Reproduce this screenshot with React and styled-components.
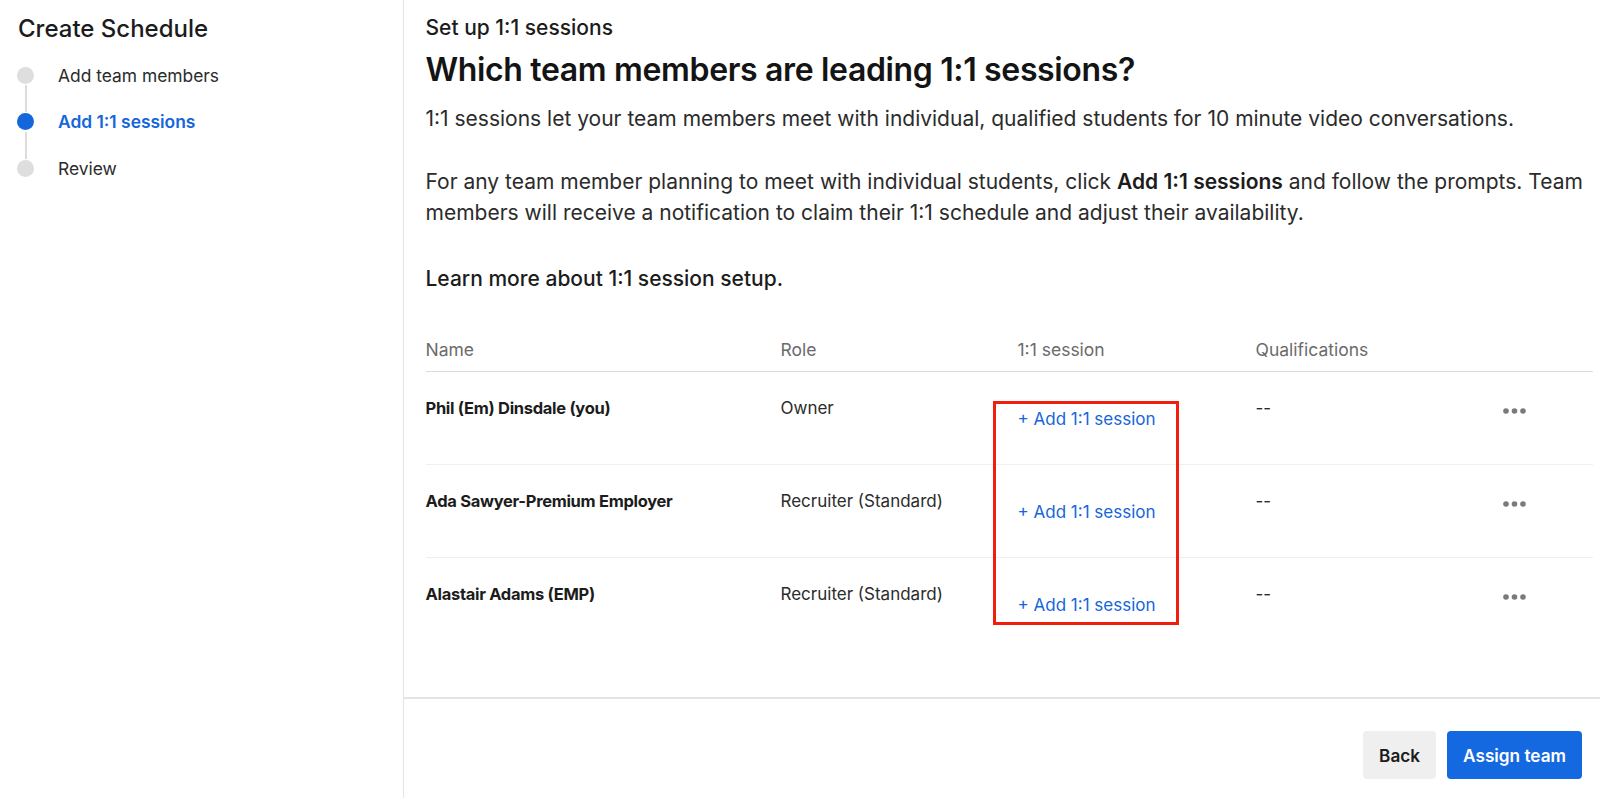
import React from 'react';
import styled, { createGlobalStyle } from 'styled-components';

const colorInk = '#1c1c1c';
const colorBody = '#2b2b2b';
const colorMuted = '#6b6b6b';
const colorBlue = '#1566db';
const colorLine = '#e4e4e4';

const GlobalStyle = createGlobalStyle`
  html, body {
    margin: 0;
    padding: 0;
    background: #fff;
  }
  body {
    font-family: Inter, "Noto Sans", "Liberation Sans", sans-serif;
    color: ${colorInk};
  }
  * { box-sizing: border-box; }
`;

const steps = [
  { label: 'Add team members', state: 'done' },
  { label: 'Add 1:1 sessions', state: 'active' },
  { label: 'Review', state: 'todo' },
];

const members = [
  { name: 'Phil (Em) Dinsdale (you)', role: 'Owner' },
  { name: 'Ada Sawyer-Premium Employer', role: 'Recruiter (Standard)' },
  { name: 'Alastair Adams (EMP)', role: 'Recruiter (Standard)' },
];

const MoreIcon = () => (
  <svg width="23" height="6" viewBox="0 0 23 6" fill="#7a7a7a">
    <circle cx="3" cy="3" r="2.8" />
    <circle cx="11.5" cy="3" r="2.8" />
    <circle cx="20" cy="3" r="2.8" />
  </svg>
);

const App = () => (
  <>
    <GlobalStyle />
    <Page>
      <Sidebar>
        <SidebarTitle>Create Schedule</SidebarTitle>
        <StepList>
          {steps.map((step, i) => (
            <Step key={step.label} last={i === steps.length - 1}>
              <StepDot active={step.state === 'active'} />
              <StepLabel active={step.state === 'active'}>{step.label}</StepLabel>
            </Step>
          ))}
        </StepList>
      </Sidebar>

      <Main>
        <Content>
          <Eyebrow>Set up 1:1 sessions</Eyebrow>
          <Heading>Which team members are leading 1:1 sessions?</Heading>
          <Paragraph>
            1:1 sessions let your team members meet with individual, qualified students for 10 minute video conversations.
          </Paragraph>
          <Paragraph spaced>
            For any team member planning to meet with individual students, click <strong>Add 1:1 sessions</strong> and follow the prompts. Team members will receive a notification to claim their 1:1 schedule and adjust their availability.
          </Paragraph>
          <LearnMore>Learn more about 1:1 session setup.</LearnMore>

          <Table>
            <HeaderRow>
              <HeaderCell>Name</HeaderCell>
              <HeaderCell>Role</HeaderCell>
              <HeaderCell>1:1 session</HeaderCell>
              <HeaderCell>Qualifications</HeaderCell>
              <HeaderCell />
            </HeaderRow>
            <Body>
              {members.map((m, i) => (
                <Row key={m.name} last={i === members.length - 1}>
                  <NameCell>{m.name}</NameCell>
                  <Cell>{m.role}</Cell>
                  <LinkCell>
                    <AddLink>+ Add 1:1 session</AddLink>
                  </LinkCell>
                  <Cell>--</Cell>
                  <ActionCell>
                    <MoreIcon />
                  </ActionCell>
                </Row>
              ))}
              <Highlight />
            </Body>
          </Table>
        </Content>

        <Footer>
          <Button>Back</Button>
          <Button primary>Assign team</Button>
        </Footer>
      </Main>
    </Page>
  </>
);

const Page = styled.div`
  display: flex;
  height: 100vh;
  overflow: hidden;
`;

const Sidebar = styled.aside`
  width: 404px;
  flex-shrink: 0;
  border-right: 1px solid ${colorLine};
  padding: 12.5px 18px;
`;

const SidebarTitle = styled.h1`
  margin: 0;
  font-size: 24px;
  line-height: 32px;
  font-weight: 500;
  color: ${colorInk};
`;

const StepList = styled.ol`
  list-style: none;
  margin: 7.5px 0 0;
  padding: 0;
`;

const Step = styled.li`
  position: relative;
  display: flex;
  align-items: center;
  height: 46.5px;
  gap: 24px;

  &::after {
    content: '';
    display: ${({ last }) => (last ? 'none' : 'block')};
    position: absolute;
    left: 6.5px;
    top: 33px;
    width: 2px;
    height: 27px;
    background: #dcdcdc;
  }
`;

const StepDot = styled.span`
  width: 17px;
  height: 17px;
  margin-left: -1px;
  border-radius: 50%;
  flex-shrink: 0;
  background: ${({ active }) => (active ? colorBlue : '#dedede')};
`;

const StepLabel = styled.span`
  font-size: 17.4px;
  font-weight: ${({ active }) => (active ? 600 : 400)};
  color: ${({ active }) => (active ? colorBlue : colorBody)};
`;

const Main = styled.main`
  flex: 1;
  display: flex;
  flex-direction: column;
  min-width: 0;
`;

const Content = styled.div`
  flex: 1;
  padding: 13.5px 7px 0 21.5px;
`;

const Eyebrow = styled.div`
  font-size: 21px;
  line-height: 28px;
  font-weight: 500;
  color: ${colorInk};
`;

const Heading = styled.h2`
  margin: 8px 0 0;
  font-size: 32px;
  line-height: 40px;
  font-weight: 600;
  color: #141414;
  letter-spacing: -0.35px;
`;

const Paragraph = styled.p`
  margin: ${({ spaced }) => (spaced ? '31.5px' : '13px')} 0 0;
  font-size: 21px;
  line-height: 31.7px;
  color: ${colorBody};
  letter-spacing: 0;

  strong {
    font-weight: 600;
    color: ${colorInk};
  }
`;

const LearnMore = styled.p`
  margin: 33.5px 0 0;
  font-size: 21px;
  line-height: 31.7px;
  font-weight: 500;
  color: ${colorInk};
`;

const Table = styled.div`
  margin-top: 31.5px;
`;

const columns = '355px 237px 238px 247px 1fr';

const HeaderRow = styled.div`
  display: grid;
  grid-template-columns: ${columns};
  padding: 12px 0 9.5px;
  border-bottom: 1px solid #dcdcdc;
`;

const HeaderCell = styled.div`
  font-size: 17.5px;
  line-height: 24px;
  color: ${colorMuted};
`;

const Body = styled.div`
  position: relative;
`;

const Row = styled.div`
  display: grid;
  grid-template-columns: ${columns};
  height: 93px;
  border-bottom: 1px solid ${({ last }) => (last ? 'transparent' : '#efefef')};
`;

const Cell = styled.div`
  padding-top: 24px;
  font-size: 17px;
  line-height: 24px;
  color: ${colorBody};
`;

const NameCell = styled(Cell)`
  font-size: 16.5px;
  font-weight: 700;
  letter-spacing: -0.3px;
  color: ${colorInk};
`;

const LinkCell = styled.div`
  padding-top: 35px;
`;

const AddLink = styled.a`
  font-size: 17px;
  line-height: 24px;
  color: ${colorBlue};
  cursor: pointer;
  text-decoration: none;
`;

const ActionCell = styled.div`
  padding-top: 36px;
  line-height: 0;
`;

const Highlight = styled.div`
  position: absolute;
  left: 567.5px;
  top: 28.5px;
  width: 186px;
  height: 224px;
  border: 3px solid #f21d0d;
  pointer-events: none;
`;

const Footer = styled.footer`
  height: 101px;
  flex-shrink: 0;
  border-top: 2px solid ${colorLine};
  display: flex;
  justify-content: flex-end;
  align-items: flex-start;
  gap: 11px;
  padding: 32px 18px 0 0;
`;

const Button = styled.button`
  height: 48px;
  padding: 0 16px;
  border: none;
  border-radius: 4px;
  font-family: inherit;
  font-size: 17.2px;
  font-weight: 600;
  cursor: pointer;
  background: ${({ primary }) => (primary ? '#1569e0' : '#efefef')};
  color: ${({ primary }) => (primary ? '#fff' : colorInk)};
`;

export default App;
